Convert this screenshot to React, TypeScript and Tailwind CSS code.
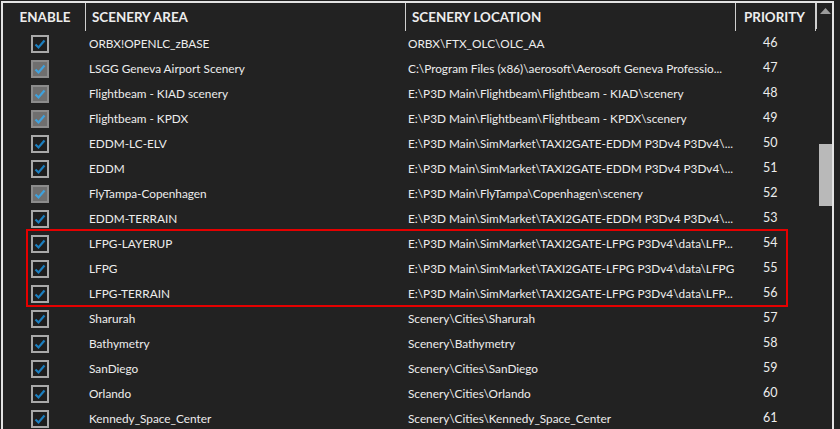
type Row = {
  name: string
  location: string
  priority: number
  dimmed?: boolean
}

const rows: Row[] = [
  { name: "ORBX!OPENLC_zBASE", location: "ORBX\\FTX_OLC\\OLC_AA", priority: 46 },
  { name: "LSGG Geneva Airport Scenery", location: "C:\\Program Files (x86)\\aerosoft\\Aerosoft Geneva Professio...", priority: 47, dimmed: true },
  { name: "Flightbeam - KIAD scenery", location: "E:\\P3D Main\\Flightbeam\\Flightbeam - KIAD\\scenery", priority: 48, dimmed: true },
  { name: "Flightbeam - KPDX", location: "E:\\P3D Main\\Flightbeam\\Flightbeam - KPDX\\scenery", priority: 49, dimmed: true },
  { name: "EDDM-LC-ELV", location: "E:\\P3D Main\\SimMarket\\TAXI2GATE-EDDM P3Dv4 P3Dv4\\...", priority: 50 },
  { name: "EDDM", location: "E:\\P3D Main\\SimMarket\\TAXI2GATE-EDDM P3Dv4 P3Dv4\\...", priority: 51 },
  { name: "FlyTampa-Copenhagen", location: "E:\\P3D Main\\FlyTampa\\Copenhagen\\scenery", priority: 52, dimmed: true },
  { name: "EDDM-TERRAIN", location: "E:\\P3D Main\\SimMarket\\TAXI2GATE-EDDM P3Dv4 P3Dv4\\...", priority: 53 },
  { name: "LFPG-LAYERUP", location: "E:\\P3D Main\\SimMarket\\TAXI2GATE-LFPG P3Dv4\\data\\LFP...", priority: 54 },
  { name: "LFPG", location: "E:\\P3D Main\\SimMarket\\TAXI2GATE-LFPG P3Dv4\\data\\LFPG", priority: 55 },
  { name: "LFPG-TERRAIN", location: "E:\\P3D Main\\SimMarket\\TAXI2GATE-LFPG P3Dv4\\data\\LFP...", priority: 56 },
  { name: "Sharurah", location: "Scenery\\Cities\\Sharurah", priority: 57 },
  { name: "Bathymetry", location: "Scenery\\Bathymetry", priority: 58 },
  { name: "SanDiego", location: "Scenery\\Cities\\SanDiego", priority: 59 },
  { name: "Orlando", location: "Scenery\\Cities\\Orlando", priority: 60 },
  { name: "Kennedy_Space_Center", location: "Scenery\\Cities\\Kennedy_Space_Center", priority: 61 },
]

function CheckBox({ dimmed }: { dimmed?: boolean }) {
  return (
    <div
      className={
        dimmed
          ? "w-[18px] h-[18px] border-2 border-[#8c8c8c] bg-[#6f6f6f] flex items-center justify-center"
          : "w-[18px] h-[18px] border-2 border-[#a9a9a9] bg-[#1e1e1e] flex items-center justify-center"
      }
    >
      <svg width="12" height="12" viewBox="0 0 12 12">
        <polyline
          points="1.5,6.5 4.5,9.5 10.5,2.5"
          fill="none"
          stroke={dimmed ? "#3fa2de" : "#1b7fc0"}
          strokeWidth="2.2"
        />
      </svg>
    </div>
  )
}

export default function App() {
  return (
    <div
      className="relative w-[840px] h-[429px] bg-[#222222] overflow-hidden pl-[1px] pt-[1px] text-[#ededed]"
      style={{ fontFamily: 'Lato, "Noto Sans", sans-serif' }}
    >
      <div className="w-[833px] h-[440px] border-l-2 border-t-2 border-r-2 border-[#e4e4e4] flex">
        {/* table */}
        <div className="w-[813px] flex flex-col">
          <div className="h-[28px] grid grid-cols-[83px_320px_330px_80px] items-center text-[13.4px] font-bold">
            <div className="h-full flex items-center justify-center pl-[2px] border-r border-[#cfcfcf]">ENABLE</div>
            <div className="h-full flex items-center pl-[6px] border-r border-[#cfcfcf]">SCENERY AREA</div>
            <div className="h-full flex items-center pl-[6px] border-r border-[#cfcfcf]">SCENERY LOCATION</div>
            <div className="h-full flex items-center pl-[8px] border-r border-[#cfcfcf]">PRIORITY</div>
          </div>
          {rows.map((r) => (
            <div key={r.priority} className="h-[25px] grid grid-cols-[83px_320px_330px_80px] items-center text-[11.8px]">
              <div className="pl-[28px]">
                <CheckBox dimmed={r.dimmed} />
              </div>
              <div className="pl-[3px] truncate">{r.name}</div>
              <div className="pl-[2px] truncate">{r.location}</div>
              <div className="pl-[27px] text-[12.5px]">{r.priority}</div>
            </div>
          ))}
        </div>
        {/* scroll bar */}
        <div className="flex-1 flex flex-col">
          <div className="h-[26px] border-l border-[#cfcfcf] flex justify-center pt-[5px] pl-[2px]">
            <svg width="11" height="6" viewBox="0 0 11 6">
              <polygon points="0,6 5.5,0 11,6" fill="#9c9c9c" />
            </svg>
          </div>
          <div className="pl-[3px] mt-[115px]">
            <div className="h-[62px] bg-[#b9b9b9]" />
          </div>
        </div>
      </div>
      {/* highlight around the LFPG entries */}
      <div className="absolute left-[26px] top-[229px] w-[762px] h-[78px] border-2 border-[#e50000] pointer-events-none" />
    </div>
  )
}
